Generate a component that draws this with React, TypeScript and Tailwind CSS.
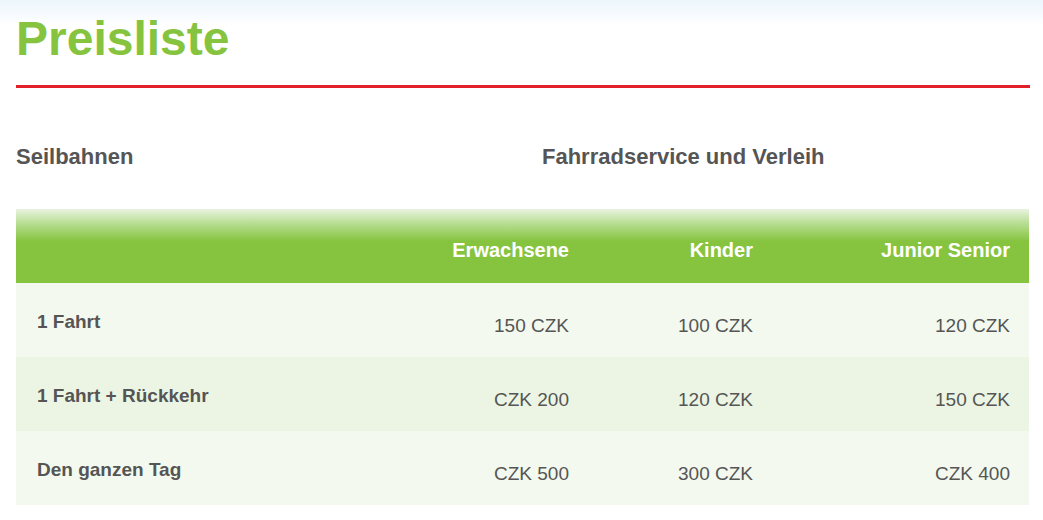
import React from "react";

const rows = [
  { label: "1 Fahrt", values: ["150 CZK", "100 CZK", "120 CZK"], bg: "bg-[#f3f9ee]" },
  { label: "1 Fahrt + Rückkehr", values: ["CZK 200", "120 CZK", "150 CZK"], bg: "bg-[#ecf5e3]" },
  { label: "Den ganzen Tag", values: ["CZK 500", "300 CZK", "CZK 400"], bg: "bg-[#f3f9ee]" },
];

export default function App() {
  return (
    <div
      className="w-[1043px] h-[520px] overflow-hidden bg-[linear-gradient(to_bottom,#edf5fd_0px,#ffffff_26px)] px-[16px] pt-[15px]"
      style={{ fontFamily: '"Liberation Sans", Arial, sans-serif' }}
    >
      <div className="w-[1014px]">
        <h1 className="text-[48px] leading-[48px] font-bold text-[#86c440]">Preisliste</h1>
        <div className="mt-[22px] h-[3px] bg-[#e2202a]" />
        <div className="mt-[58px] flex text-[22px] leading-[22px] font-bold text-[#555555]">
          <div className="w-[526px]">Seilbahnen</div>
          <div>Fahrradservice und Verleih</div>
        </div>
        <div className="mt-[41px] w-[1013px]">
          <div className="grid grid-cols-[389px_184px_184px_256px] h-[74px] bg-[linear-gradient(to_bottom,#eaf4e0_0px,#b9de95_14px,#86c440_32px,#86c440_100%)] text-white font-bold text-[20px] leading-[20px]">
            <div />
            <div className="pt-[31px] pr-[20px] text-right">Erwachsene</div>
            <div className="pt-[31px] pr-[20px] text-right">Kinder</div>
            <div className="pt-[31px] pr-[19px] text-right">Junior Senior</div>
          </div>
          {rows.map((r) => (
            <div key={r.label} className={`grid grid-cols-[389px_184px_184px_256px] h-[74px] ${r.bg} text-[#555555]`}>
              <div className="pl-[21px] pt-[29px] text-[19px] leading-[19px] font-bold">{r.label}</div>
              <div className="pr-[20px] pt-[33px] text-right text-[19px] leading-[19px]">{r.values[0]}</div>
              <div className="pr-[20px] pt-[33px] text-right text-[19px] leading-[19px]">{r.values[1]}</div>
              <div className="pr-[19px] pt-[33px] text-right text-[19px] leading-[19px]">{r.values[2]}</div>
            </div>
          ))}
        </div>
      </div>
    </div>
  );
}
